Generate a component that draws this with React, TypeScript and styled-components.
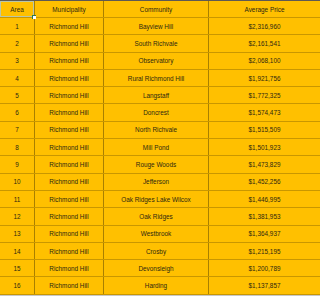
import React from "react";
import styled, { createGlobalStyle } from "styled-components";

const rows = [
  ["1", "Richmond Hill", "Bayview Hill", "$2,316,960"],
  ["2", "Richmond Hill", "South Richvale", "$2,161,541"],
  ["3", "Richmond Hill", "Observatory", "$2,068,100"],
  ["4", "Richmond Hill", "Rural Richmond Hill", "$1,921,756"],
  ["5", "Richmond Hill", "Langstaff", "$1,772,325"],
  ["6", "Richmond Hill", "Doncrest", "$1,574,473"],
  ["7", "Richmond Hill", "North Richvale", "$1,515,509"],
  ["8", "Richmond Hill", "Mill Pond", "$1,501,923"],
  ["9", "Richmond Hill", "Rouge Woods", "$1,473,829"],
  ["10", "Richmond Hill", "Jefferson", "$1,452,256"],
  ["11", "Richmond Hill", "Oak Ridges Lake Wilcox", "$1,446,995"],
  ["12", "Richmond Hill", "Oak Ridges", "$1,381,953"],
  ["13", "Richmond Hill", "Westbrook", "$1,364,937"],
  ["14", "Richmond Hill", "Crosby", "$1,215,195"],
  ["15", "Richmond Hill", "Devonsleigh", "$1,200,789"],
  ["16", "Richmond Hill", "Harding", "$1,137,857"],
];

const GlobalStyle = createGlobalStyle`
  html, body {
    margin: 0;
    padding: 0;
    background: #c8c8c8;
  }
`;

const Sheet = styled.div`
  width: 320px;
  height: 296px;
  box-sizing: border-box;
  border-top: 1px solid #5e5953;
  background: #c8c8c8;
  font-family: "Liberation Sans", Arial, sans-serif;
  font-size: 6.4px;
  color: #2e2810;
`;

const Row = styled.div<{ $head?: boolean }>`
  display: grid;
  grid-template-columns: 35px 69px 105px 111px;
  height: ${(p) => (p.$head ? "17px" : "17.3px")};
  box-sizing: border-box;
  background: #ffc000;
  border-bottom: 1px solid #c99700;
`;

const Cell = styled.div<{ $last?: boolean; $selected?: boolean }>`
  position: relative;
  display: flex;
  align-items: center;
  justify-content: center;
  white-space: nowrap;
  border-right: ${(p) => (p.$last ? "none" : "1px solid #a98000")};
  box-shadow: ${(p) =>
    p.$selected ? "inset 0 0 0 1px #b9c6a8" : "none"};
`;

const Handle = styled.span`
  position: absolute;
  right: -2px;
  bottom: -2px;
  width: 3px;
  height: 3px;
  background: #ffffff;
  border-top: 1px solid #2f7a4a;
  border-left: 1px solid #2f7a4a;
  z-index: 1;
`;

export default function App() {
  return (
    <>
      <GlobalStyle />
      <Sheet>
        <Row $head>
          <Cell $selected>
            Area
            <Handle />
          </Cell>
          <Cell>Municipality</Cell>
          <Cell>Community</Cell>
          <Cell $last>Average Price</Cell>
        </Row>
        {rows.map((r) => (
          <Row key={r[0]}>
            <Cell>{r[0]}</Cell>
            <Cell>{r[1]}</Cell>
            <Cell>{r[2]}</Cell>
            <Cell $last>{r[3]}</Cell>
          </Row>
        ))}
      </Sheet>
    </>
  );
}
